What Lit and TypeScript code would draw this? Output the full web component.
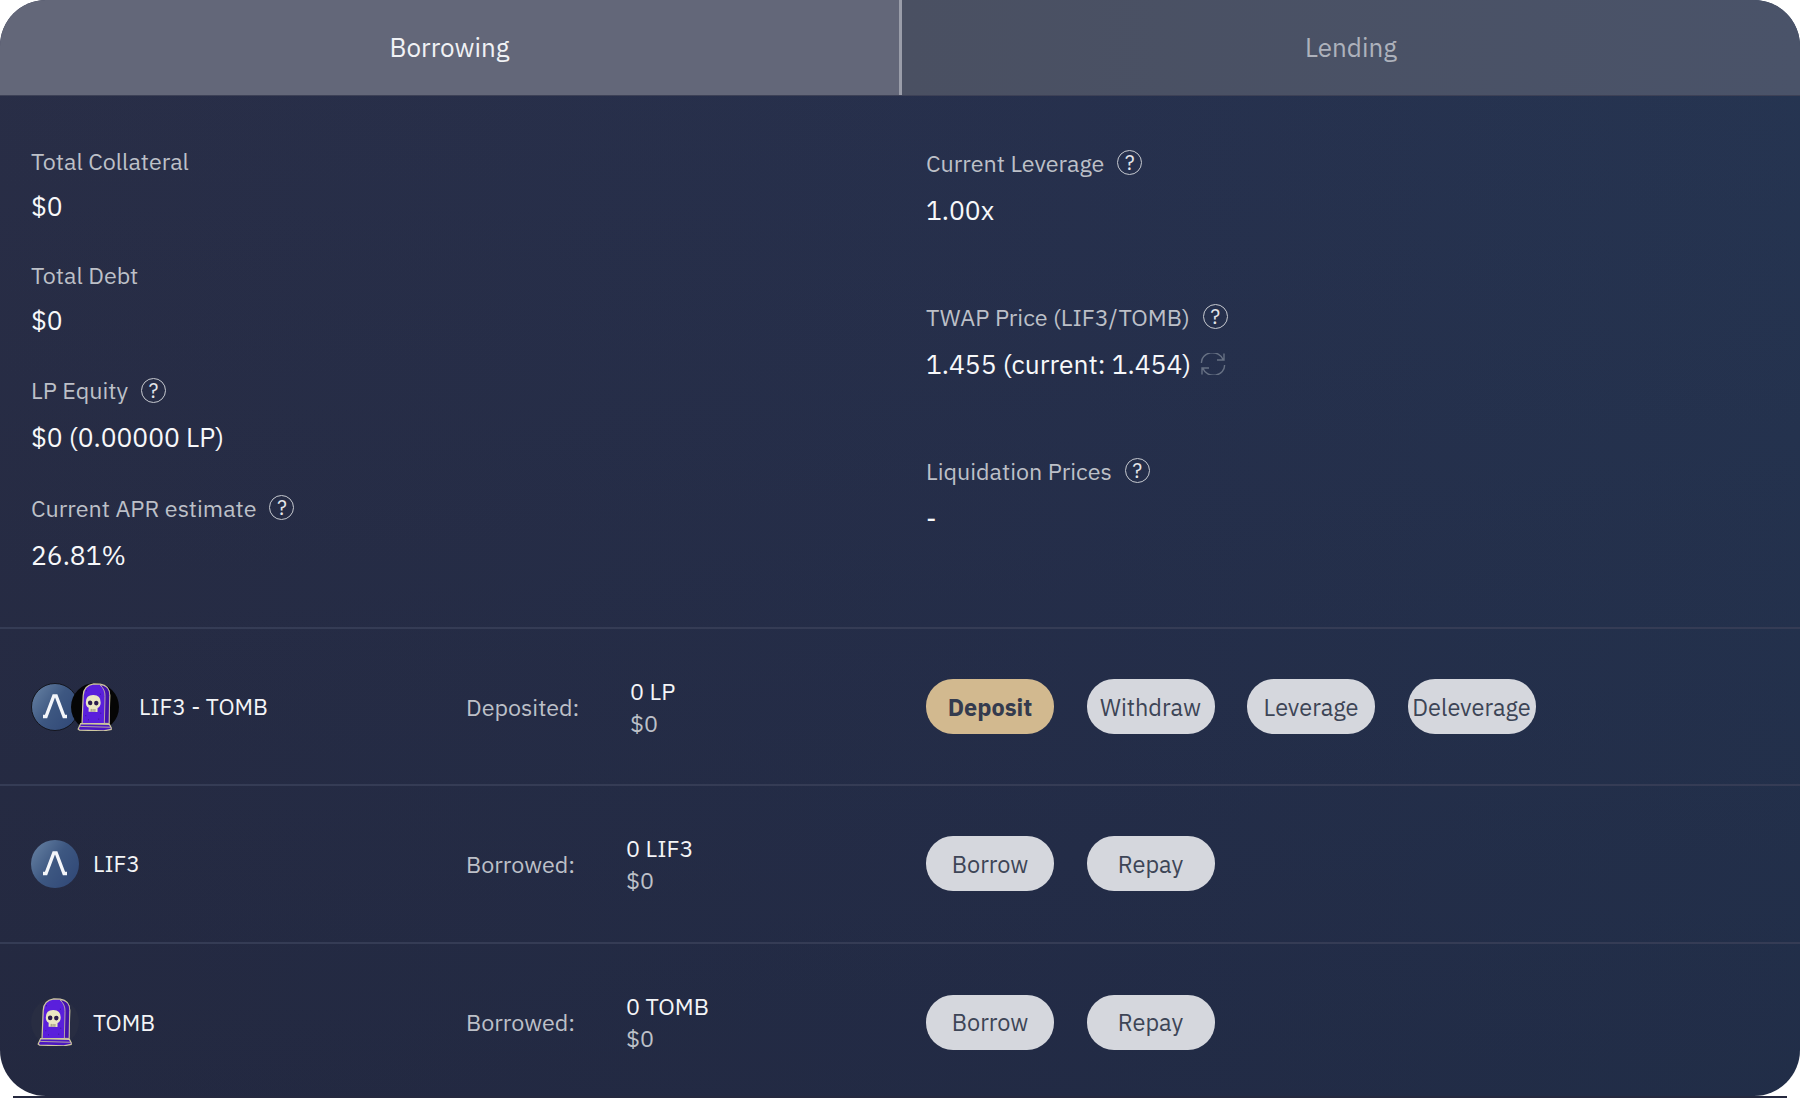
import { LitElement, html, css, svg } from "lit";
import { customElement } from "lit/decorators.js";

const help = html`<span class="help">?</span>`;

const lif3 = (id: string, ring = false) => html`<svg class="coin" viewBox="0 0 48 48">
  <defs><linearGradient id=${id} x1="0" y1="0" x2="1" y2="0.7">
    <stop offset="0" stop-color="#6a85a6"/><stop offset="0.55" stop-color="#3d5781"/><stop offset="1" stop-color="#324a78"/>
  </linearGradient></defs>
  <circle cx="24" cy="24" r=${ring ? 23.5 : 24} fill="url(#${id})" stroke=${ring ? "#14161f" : "none"}/>
  <path d="M12 33.5 H15 L22.8 13 H25.2 L33 33.5 H36" fill="none" stroke="#f4f6fa" stroke-width="3.3"/>
</svg>`;

const tombShape = svg`
  <g transform="translate(24 0) scale(.93 1) translate(-25 0) rotate(1.5 24 24)">
  <path d="M11.5 41 L12 13 Q12 3 23 1 H30 Q40 2 40.5 12 V40 Z" fill="#5a1fdc" stroke="#cfc9a0" stroke-width="1.3"/>
  <path d="M33 2 Q40.5 4 40.5 12 V40 H35.5 V13 Q35.5 6 30 2 Z" fill="#4512ad" stroke="#cfc9a0" stroke-width="0.8"/>
  <path d="M7.5 46.5 L10 41 H41 L43 44.5 V46 L35 47.5 H9 Z" fill="#4b17c0" stroke="#cfc9a0" stroke-width="1.3"/>
  <path d="M9.5 43.8 H42" stroke="#cfc9a0" stroke-width="0.8"/>
  <path d="M15 19.5 Q15 12 23 12 Q31 12 31 19.5 Q31 23.5 27.8 25 V28.8 H18.2 V25 Q15 23.5 15 19.5 Z" fill="#ebe7c2"/>
  <circle cx="19.7" cy="20" r="2.4" fill="#2a1b4d"/>
  <circle cx="26.3" cy="20" r="2.4" fill="#2a1b4d"/>
  <path d="M21 26 V28.8 M23 26 V28.8 M25 26 V28.8" stroke="#6a6650" stroke-width="0.7"/>
  <path d="M15 8h.8M30 11h.8M15 33h.8M29 36h.8M18 37h.8M31 30h.8" stroke="#2a0f70" stroke-width="0.9"/>
  </g>
`;

const tomb = (disc: string) => html`<svg class="coin" viewBox="0 0 48 48">
  <circle cx="24" cy="24" r="24" fill=${disc}/>${tombShape}
</svg>`;

const refresh = html`<svg class="refresh" viewBox="0 0 26 22" fill="none" stroke="#667083" stroke-width="1.4">
  <path d="M1.5 10 A11 9.5 0 0 1 23 6.5 M24 0.5 V7 H17"/>
  <path d="M24.5 12 A11 9.5 0 0 1 3 15.5 M2 21.5 V15 H9"/>
</svg>`;

interface Stat { label: string; value: unknown; help?: boolean; }

const leftStats: Stat[] = [
  { label: "Total Collateral", value: "$0" },
  { label: "Total Debt", value: "$0" },
  { label: "LP Equity", value: "$0 (0.00000 LP)", help: true },
  { label: "Current APR estimate", value: "26.81%", help: true },
];
const rightStats: Stat[] = [
  { label: "Current Leverage", value: "1.00x", help: true },
  { label: "TWAP Price (LIF3/TOMB)", value: html`1.455 (current: 1.454)${refresh}`, help: true },
  { label: "Liquidation Prices", value: "-", help: true },
];

@customElement("app-root")
export class AppRoot extends LitElement {
  static styles = css`
    :host { display: block; width: 1800px; height: 1098px; background: #fff; overflow: hidden;
      font-family: "IBM Plex Sans", "Noto Sans", Roboto, sans-serif; }
    .card { height: 1096px; border-radius: 46px; overflow: hidden; display: flex; flex-direction: column;
      background: linear-gradient(180deg, rgba(22,28,48,0) 0%, rgba(22,28,48,0.3) 100%), linear-gradient(90deg, #292e47 0%, #27314e 60%, #263552 100%); }
    .edge { height: 2px; margin: 0 13px; background: #25293f; }
    .tabs { display: grid; grid-template-columns: 902px 1fr; height: 95px; flex: none; border-bottom: 1px solid #3d4156; box-sizing: content-box; }
    .tab { display: flex; align-items: center; justify-content: center; font-size: 26px; padding-bottom: 2px; box-sizing: border-box; }
    .tab.on { background: #636779; color: #f1f2f5; border-right: 3px solid #9a9da9; }
    .tab.off { background: linear-gradient(90deg, #4a5062, #4a5369); color: #aeb2bc; }
    .stats { display: grid; grid-template-columns: 926px 1fr; height: 533px; flex: none; border-bottom: 2px solid #353c55; box-sizing: border-box; }
    .col { display: flex; flex-direction: column; }
    .col.l { padding: 51px 0 0 31px; }
    .col.r { padding-top: 50.5px; }
    .col.l .stat { padding-bottom: 38.5px; }
    .col.r .stat { padding-bottom: 75px; }
    .stat .lab { display: flex; align-items: center; height: 28px; font-size: 23.3px; color: #bdc0c8; }
    .stat .lab.h { height: 32px; }
    .stat .val { display: flex; align-items: center; height: 32px; margin-top: 15px; font-size: 26.4px; color: #f7f8fa; white-space: pre; }
    .help { display: inline-flex; align-items: center; justify-content: center; width: 23px; height: 23px; margin-left: 13px;
      border: 1.5px solid #c6c9cf; border-radius: 50%; font-size: 20px; color: #e4e6ea; box-sizing: content-box; flex: none; }
    .refresh { width: 26px; height: 22px; margin-left: 9px; }
    .row { height: 157.25px; flex: none; box-sizing: border-box; display: grid; grid-template-columns: 435px 164px 296px 1fr; align-items: center; padding-left: 31px; border-bottom: 2px solid #353c55; }
    .row:last-child { border-bottom: none; }
    .name { font-size: 22.8px; color: #f4f5f7; }
    .name-cell { display: flex; align-items: center; }
    .coin { width: 48px; height: 48px; flex: none; display: block; }
    .coin + .coin { margin-left: -8px; }
    .coins { display: flex; margin-right: 14px; }
    .coins.dual { margin-right: 20px; }
    .rowlabel { font-size: 23.3px; color: #bdc0c8; }
    .amount { display: flex; flex-direction: column; gap: 7px; margin-top: 1px; font-size: 23.3px; line-height: 25px; color: #f4f5f7; }
    .amount .usd { color: #bdc0c8; }
    .amount.b { margin-left: -4px; }
    .acts { display: flex; gap: 32.5px; }
    .btn { width: 128px; height: 55px; border-radius: 27px; background: #d5d7dd; color: #3d4556; font-size: 23.5px; display: flex; align-items: center; justify-content: center; white-space: nowrap; }
    .btn.gold { background: #d2b98f; font-weight: 700; color: #343b4e; }
  `;

  private stat(s: Stat) {
    return html`<div class="stat">
      <div class="lab ${s.help ? "h" : ""}">${s.label}${s.help ? help : ""}</div>
      <div class="val">${s.value}</div>
    </div>`;
  }

  private row(icon: unknown, name: string, label: string, amount: string, usd: string, actions: string[], dual = false) {
    return html`<div class="row">
      <div class="name-cell"><div class="coins ${dual ? "dual" : ""}">${icon}</div><span class="name">${name}</span></div>
      <div class="rowlabel">${label}</div>
      <div class="amount ${dual ? "" : "b"}"><span>${amount}</span><span class="usd">${usd}</span></div>
      <div class="acts">${actions.map((a) => html`<div class="btn ${a === "Deposit" ? "gold" : ""}">${a}</div>`)}</div>
    </div>`;
  }

  render() {
    return html`<div class="card">
      <div class="tabs"><div class="tab on">Borrowing</div><div class="tab off">Lending</div></div>
      <div class="stats">
        <div class="col l">${leftStats.map((s) => this.stat(s))}</div>
        <div class="col r">${rightStats.map((s) => this.stat(s))}</div>
      </div>
      ${this.row(html`${lif3("g1", true)}${tomb("#050505")}`, "LIF3 - TOMB", "Deposited:", "0 LP", "$0", ["Deposit", "Withdraw", "Leverage", "Deleverage"], true)}
      ${this.row(lif3("g2"), "LIF3", "Borrowed:", "0 LIF3", "$0", ["Borrow", "Repay"])}
      ${this.row(tomb("#282d42"), "TOMB", "Borrowed:", "0 TOMB", "$0", ["Borrow", "Repay"])}
    </div><div class="edge"></div>`;
  }
}
